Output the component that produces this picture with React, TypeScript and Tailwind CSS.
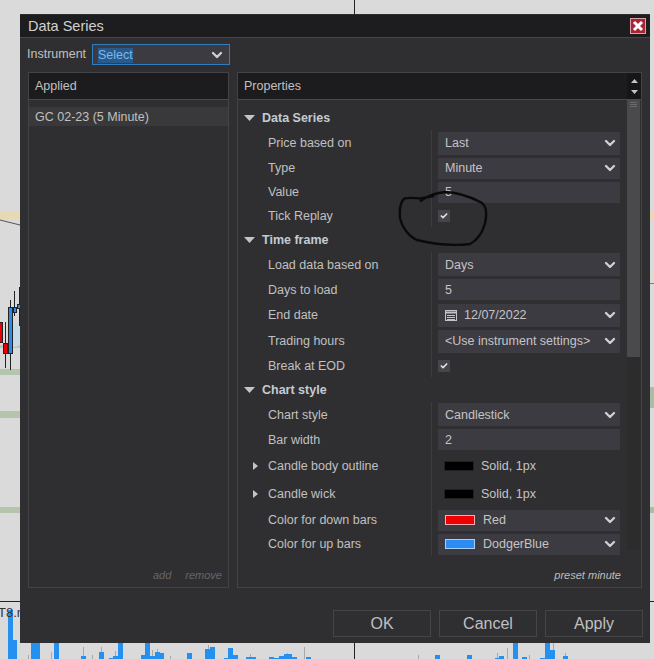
import type { ReactNode } from 'react'
import { ChevronDown, Check } from 'lucide-react'

const volumeBars: [number, number, number][] = [
  [8, 5, 610], [13, 4, 640], [31, 9, 643], [54, 5, 643], [81, 5, 656], [99, 5, 652], [109, 4, 658], [113, 5, 656],
  [118, 5, 643], [141, 4, 655], [145, 5, 643], [150, 5, 656], [155, 5, 652], [160, 4, 653], [187, 5, 653], [205, 5, 649],
  [210, 5, 647], [224, 4, 658], [228, 5, 648], [233, 5, 655], [246, 10, 657], [269, 5, 657], [274, 5, 658], [279, 5, 656],
  [284, 8, 654], [292, 5, 657], [306, 5, 657], [435, 5, 655], [467, 5, 655], [495, 4, 658], [499, 5, 656], [513, 5, 643],
  [522, 5, 657], [540, 5, 658], [545, 5, 643], [550, 5, 650], [563, 5, 656],
]

const volumeWicks: [number, number][] = [
  [28, 655], [51, 652], [83, 647], [92, 655], [101, 647], [115, 651], [152, 650], [157, 649], [170, 656], [208, 645],
  [250, 654], [287, 653], [304, 647], [418, 655], [497, 653], [507, 648], [529, 655], [553, 643], [565, 653],
]

function ChartBackdrop() {
  return (
    <svg className="absolute left-0 top-0" width="654" height="659" viewBox="0 0 654 659">
      <rect x="0" y="212" width="20" height="7" fill="#e8d9b5" />
      <rect x="650" y="212" width="4" height="7" fill="#e8d9b5" />
      <rect x="650" y="276" width="4" height="2" fill="#e8d9b5" />
      <rect x="650" y="283" width="4" height="1" fill="#e05050" />
      <rect x="650" y="387" width="4" height="21" fill="#a9bda4" />
      <rect x="650" y="507" width="4" height="6" fill="#a9bda4" />
      <rect x="0" y="345" width="20" height="3" fill="#b9c9b2" />
      <rect x="0" y="369" width="20" height="6" fill="#b5c4ac" />
      <rect x="0" y="411" width="20" height="7" fill="#b5c4ac" />
      <rect x="0" y="507" width="20" height="6" fill="#b5c4ac" />
      <ellipse cx="15" cy="335" rx="6" ry="12" fill="#c6dbe8" />
      <line x1="0" y1="220" x2="20" y2="225" stroke="#555" />
      <line x1="354.5" y1="0" x2="354.5" y2="14" stroke="#222" />
      <line x1="354.5" y1="643" x2="354.5" y2="659" stroke="#222" />
      <line x1="0" y1="601.5" x2="20" y2="601.5" stroke="#222" />
      <line x1="650" y1="601.5" x2="654" y2="601.5" stroke="#222" />
      <line x1="5.5" y1="322" x2="5.5" y2="368" stroke="#222" />
      <line x1="10.5" y1="300" x2="10.5" y2="370" stroke="#222" />
      <line x1="14.5" y1="291" x2="14.5" y2="316" stroke="#222" />
      <line x1="19.5" y1="287" x2="19.5" y2="326" stroke="#222" />
      <rect x="-1" y="322.5" width="3.5" height="20" fill="#e8000b" stroke="#222" />
      <rect x="3.5" y="343.5" width="4" height="10" fill="#e8000b" stroke="#222" />
      <rect x="8.5" y="307.5" width="4" height="46" fill="#2f8ae8" stroke="#222" />
      <rect x="13.5" y="307.5" width="3" height="5" fill="#2f8ae8" stroke="#222" />
      <rect x="17.5" y="304.5" width="3" height="4" fill="#2f8ae8" stroke="#222" />
      {volumeWicks.map(([x, top]) => (
        <line key={x} x1={x + 0.5} y1={top} x2={x + 0.5} y2="659" stroke="#a8a8a8" />
      ))}
      {volumeBars.map(([x, w, top]) => (
        <rect key={x} x={x} y={top} width={w} height={659 - top} fill="#2490f0" />
      ))}
      <text x="-2" y="617" fontSize="13" fontFamily="Liberation Sans, sans-serif" fill="#333">T8.m</text>
    </svg>
  )
}

function Chevron() {
  return <ChevronDown size={16} strokeWidth={3.5} className="text-[#d0d0d0]" />
}

function Field({ h, lower, children, arrow }: { h: number; lower?: boolean; children: ReactNode; arrow?: boolean }) {
  return (
    <div
      className={`flex w-[182px] items-center justify-between bg-[#3c3b41] pl-[7px] pr-[2px] text-[#c4c4c4] ${
        h === 23 ? 'h-[23px]' : 'h-[21px]'
      }`}
    >
      <div className={`flex min-w-0 items-center whitespace-nowrap ${lower ? 'pt-[2px]' : ''}`}>{children}</div>
      {arrow ? <Chevron /> : null}
    </div>
  )
}

function CheckField() {
  return (
    <div className="flex h-[12px] w-[12px] items-center justify-center bg-[#46464a]">
      <Check size={8} strokeWidth={5} className="text-[#e0e0e0]" />
    </div>
  )
}

function Swatch({ color, outline }: { color: string; outline: string }) {
  return <span className={`inline-block h-[10px] w-[30px] border ${color} ${outline}`} />
}

function CalendarIcon() {
  return (
    <svg width="12" height="12" viewBox="0 0 12 12" fill="none" stroke="#c4c4c4" strokeWidth="1">
      <rect x="0.5" y="1.5" width="11" height="10" />
      <path d="M1 3.5h10" strokeWidth="2" />
      <path d="M2 6.5h8M2 8.5h8M2 10.5h8" />
    </svg>
  )
}

function GroupHeader({ title }: { title: string }) {
  return (
    <div className="flex h-[25px] items-center">
      <svg className="ml-[6px] mr-[7px]" width="11" height="6" viewBox="0 0 11 6">
        <path d="M0 0h11L5.5 6z" fill="#c4c4c4" />
      </svg>
      <span className="pt-[2px] font-bold text-[#c3cbd3]">{title}</span>
    </div>
  )
}

function Row({
  h,
  label,
  expander,
  lower,
  children,
}: {
  h: string
  label: string
  expander?: boolean
  lower?: boolean
  children: ReactNode
}) {
  return (
    <div className={`flex ${h}`}>
      <div className="relative flex w-[194px] items-center border-r border-[#3d3d3f] pl-[30px] text-[#c0c0c0]">
        {expander ? (
          <svg className="absolute left-[15px]" width="5" height="8" viewBox="0 0 5 8">
            <path d="M0 0l5 4-5 4z" fill="#c4c4c4" />
          </svg>
        ) : null}
        <span className={lower ? 'pt-[2px]' : ''}>{label}</span>
      </div>
      <div className="flex items-center pl-[6px]">{children}</div>
    </div>
  )
}

function LineStyle() {
  return (
    <div className="flex items-center pl-[6px] text-[#c4c4c4]">
      <Swatch color="bg-black" outline="border-[#222]" />
      <span className="ml-[7px]">Solid, 1px</span>
    </div>
  )
}

function PropertyList() {
  return (
    <div className="min-w-0 flex-1 pt-[5px] text-[12.5px]">
      <GroupHeader title="Data Series" />
      <Row h="h-[26px]" label="Price based on"><Field h={23} arrow>Last</Field></Row>
      <Row h="h-[24px]" label="Type"><Field h={21} arrow>Minute</Field></Row>
      <Row h="h-[24px]" label="Value"><Field h={21}>5</Field></Row>
      <Row h="h-[23px]" label="Tick Replay" lower><CheckField /></Row>
      <GroupHeader title="Time frame" />
      <Row h="h-[25px]" label="Load data based on" lower><Field h={23} lower arrow>Days</Field></Row>
      <Row h="h-[25px]" label="Days to load" lower><Field h={21} lower>5</Field></Row>
      <Row h="h-[26px]" label="End date">
        <Field h={23} arrow>
          <CalendarIcon />
          <span className="ml-[7px]">12/07/2022</span>
        </Field>
      </Row>
      <Row h="h-[26px]" label="Trading hours"><Field h={23} arrow>&lt;Use instrument settings&gt;</Field></Row>
      <Row h="h-[23px]" label="Break at EOD" lower><CheckField /></Row>
      <GroupHeader title="Chart style" />
      <Row h="h-[25px]" label="Chart style" lower><Field h={23} lower arrow>Candlestick</Field></Row>
      <Row h="h-[25px]" label="Bar width" lower><Field h={21} lower>2</Field></Row>
      <Row h="h-[28px]" label="Candle body outline" expander><LineStyle /></Row>
      <Row h="h-[28px]" label="Candle wick" expander><LineStyle /></Row>
      <Row h="h-[24px]" label="Color for down bars">
        <Field h={21} arrow>
          <Swatch color="bg-[#f00000]" outline="border-[#f0b0b0]" />
          <span className="ml-[8px]">Red</span>
        </Field>
      </Row>
      <Row h="h-[24px]" label="Color for up bars">
        <Field h={21} arrow>
          <Swatch color="bg-[#2b8cf5]" outline="border-[#a8d0f5]" />
          <span className="ml-[8px]">DodgerBlue</span>
        </Field>
      </Row>
    </div>
  )
}

function ActionButton({ label }: { label: string }) {
  return (
    <button className="flex h-[27px] w-[98px] items-center justify-center border border-[#454547] text-[16px] text-[#c0c0c0]">
      {label}
    </button>
  )
}

function ScrollColumn() {
  return (
    <div className="mr-px flex h-[450px] w-[13px] flex-col bg-[#2c2c2d]">
      <div className="flex h-[257px] flex-col items-center bg-[#4a4a4c] pt-[2px]">
        <div className="h-[1px] w-[7px] bg-[#6a6a6c]" />
        <div className="mt-[1px] h-[1px] w-[7px] bg-[#6a6a6c]" />
        <div className="mt-[1px] h-[1px] w-[7px] bg-[#6a6a6c]" />
      </div>
    </div>
  )
}

export default function App() {
  return (
    <div className="relative h-[659px] w-[654px] overflow-hidden bg-[#dadada] font-['Liberation_Sans',sans-serif]">
      <ChartBackdrop />

      <div className="absolute left-[20px] top-[14px] flex h-[629px] w-[630px] flex-col bg-[#2f2f31]">
        <div className="mt-px flex h-[23px] items-center justify-between border-b border-[#47474a] bg-[#1d1d1f] pl-[8px] pr-[4px]">
          <span className="pt-[2px] text-[14.5px] text-[#d0d0d0]">Data Series</span>
          <div className="flex h-[16px] w-[16px] items-center justify-center border border-[#d8a0a8] bg-[#a82436]">
            <svg width="12" height="12" viewBox="0 0 12 12">
              <path d="M2 2l8 8M10 2l-8 8" stroke="#fff" strokeWidth="3" />
            </svg>
          </div>
        </div>

        <div className="mt-[6px] flex h-[21px] items-center pl-[7px] text-[12.5px] text-[#c0c0c0]">
          <span className="w-[65px]">Instrument</span>
          <div className="flex h-[21px] w-[138px] items-center justify-between border border-[#2f7fc0] bg-[#3c3b41] pl-[5px] pr-[4px] pt-px">
            <span className="bg-[#2a5a8a] leading-[15px] text-[#7ab8ea]">Select</span>
            <Chevron />
          </div>
        </div>

        <div className="ml-[8px] mt-[7px] flex h-[516px] w-[614px] gap-[8px] text-[12.5px]">
          <div className="flex w-[201px] flex-col border border-[#434345]">
            <div className="flex h-[27px] items-center border-b border-[#4a4a4c] bg-[#1c1c1e] pl-[6px] pt-px text-[#c0c0c0]">Applied</div>
            <div className="mt-[7px] flex h-[19px] items-center bg-[#39393b] pl-[6px] pt-px text-[#c0c0c0]">GC 02-23 (5 Minute)</div>
            <div className="mt-auto flex justify-end gap-[14px] pb-[4px] pr-[6px] text-[11px] italic text-[#666668]">
              <span>add</span>
              <span>remove</span>
            </div>
          </div>

          <div className="relative flex w-[405px] flex-col border border-[#434345]">
            <div className="flex h-[27px] items-center justify-between border-b border-[#4a4a4c] bg-[#1c1c1e] pl-[6px] text-[#c0c0c0]">
              <span className="pt-px">Properties</span>
              <div className="flex h-full w-[14px] flex-col items-center justify-center gap-[7px] bg-[#161618]">
                <svg width="7" height="4" viewBox="0 0 7 4"><path d="M3.5 0L7 4H0z" fill="#c4c4c4" /></svg>
                <svg width="7" height="4" viewBox="0 0 7 4"><path d="M0 0h7L3.5 4z" fill="#c4c4c4" /></svg>
              </div>
            </div>
            <div className="flex min-h-0 flex-1 justify-between">
              <PropertyList />
              <ScrollColumn />
            </div>
            <span className="absolute bottom-[4px] right-[20px] text-[11px] italic text-[#bdbdbd]">preset minute</span>
          </div>
        </div>

        <div className="mt-[22px] flex justify-end gap-[8px] pr-[7px]">
          <ActionButton label="OK" />
          <ActionButton label="Cancel" />
          <ActionButton label="Apply" />
        </div>
      </div>

      <svg className="pointer-events-none absolute left-[390px] top-[180px]" width="110" height="70" viewBox="0 0 330 210" fill="none">
        <path
          d="M92 63C105 55 120 40 165 36C200 36 240 50 275 68C290 80 292 100 285 130C278 155 262 180 240 192C190 198 130 192 80 180C55 168 35 140 30 115C28 90 30 65 45 55C60 52 80 55 90 55C105 53 120 50 130 48"
          stroke="#0a0a0a"
          strokeWidth="7"
          strokeLinecap="round"
        />
      </svg>
    </div>
  )
}
